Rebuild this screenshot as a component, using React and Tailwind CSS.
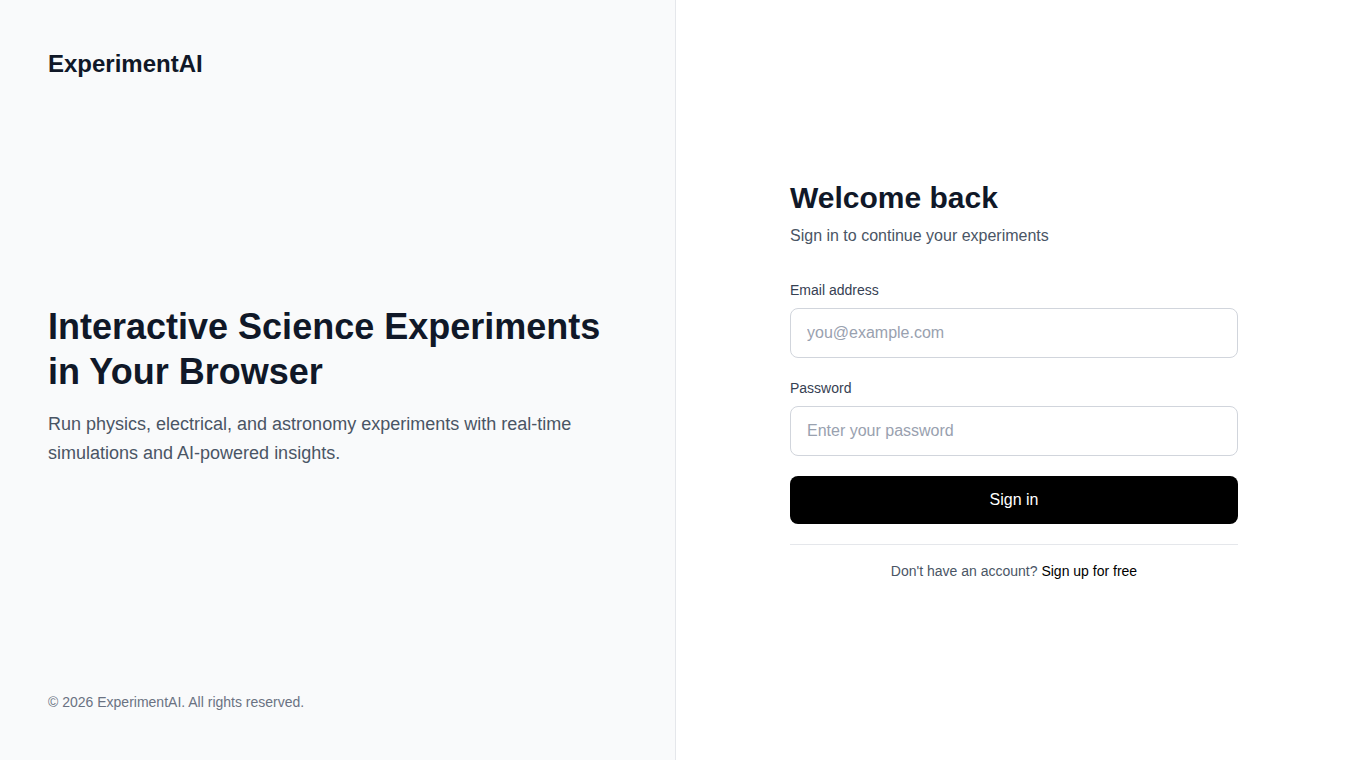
import React from 'react';

const App = () => {
  return (
    <div
      className="flex h-[760px] w-full"
      style={{ fontFamily: '"Liberation Sans", Arial, sans-serif' }}
    >
      <div className="flex w-1/2 flex-col justify-between border-r border-gray-200 bg-gray-50 p-12">
        <div className="text-2xl font-bold text-gray-900">ExperimentAI</div>
        <div>
          <h1 className="text-4xl font-bold leading-tight text-gray-900">
            Interactive Science Experiments in Your Browser
          </h1>
          <p className="mt-4 max-w-xl text-lg leading-relaxed text-gray-600">
            Run physics, electrical, and astronomy experiments with real-time simulations and
            AI-powered insights.
          </p>
        </div>
        <p className="text-sm text-gray-500">© 2026 ExperimentAI. All rights reserved.</p>
      </div>

      <div className="flex w-1/2 items-center justify-center bg-white">
        <div className="w-full max-w-md">
          <h2 className="text-3xl font-bold text-gray-900">Welcome back</h2>
          <p className="mt-2 text-base text-gray-600">Sign in to continue your experiments</p>

          <form className="mt-8 space-y-5" onSubmit={(e) => e.preventDefault()}>
            <div>
              <label className="mb-2 block text-sm font-medium text-gray-700">Email address</label>
              <input
                type="email"
                placeholder="you@example.com"
                className="block w-full rounded-lg border border-gray-300 px-4 py-3 text-base text-gray-900 placeholder-gray-400 outline-none"
              />
            </div>
            <div>
              <label className="mb-2 block text-sm font-medium text-gray-700">Password</label>
              <input
                type="password"
                placeholder="Enter your password"
                className="block w-full rounded-lg border border-gray-300 px-4 py-3 text-base text-gray-900 placeholder-gray-400 outline-none"
              />
            </div>
            <button
              type="submit"
              className="block h-12 w-full rounded-lg bg-black text-base font-medium text-white"
            >
              Sign in
            </button>
          </form>

          <div className="mt-5 border-t border-gray-200 pt-4 text-center text-sm text-gray-600">
            Don't have an account? <a className="text-black">Sign up for free</a>
          </div>
        </div>
      </div>
    </div>
  );
};

export default App;
